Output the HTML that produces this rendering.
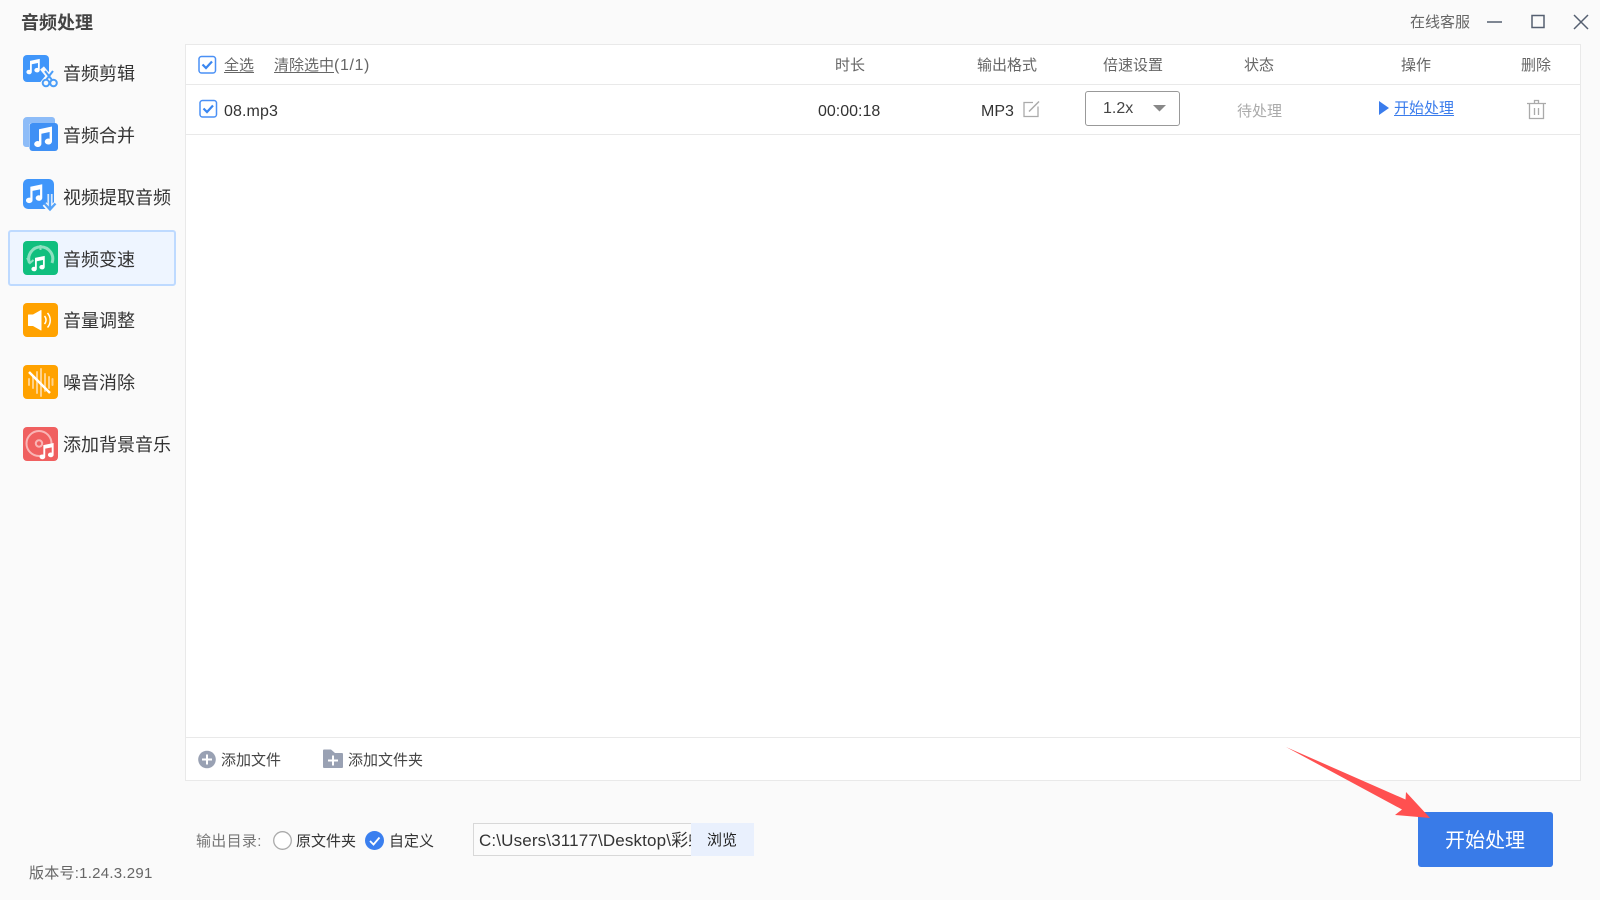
<!DOCTYPE html>
<html lang="zh">
<head>
<meta charset="utf-8">
<title>音频处理</title>
<style>
html,body{margin:0;padding:0}
body{width:1600px;height:900px;overflow:hidden;background:#fafafa;position:relative;font-family:"Liberation Sans","Noto Sans CJK SC",sans-serif;color:#333}
.t{position:absolute;white-space:nowrap;line-height:24px;height:24px;font-size:15px}
.nav{font-size:18px;left:63px;color:#333}
.h{color:#666}
.b{position:absolute;box-sizing:border-box}
svg{position:absolute;left:0;top:0}
u{text-underline-offset:2px}
</style>
</head>
<body>
<div class="b" style="left:185px;top:44px;width:1396px;height:737px;background:#fff;border:1px solid #e9e9e9"></div>
<div class="b" style="left:185px;top:84px;width:1396px;height:1px;background:#e9e9e9"></div>
<div class="b" style="left:185px;top:134px;width:1396px;height:1px;background:#e9e9e9"></div>
<div class="b" style="left:185px;top:737px;width:1396px;height:1px;background:#e9e9e9"></div>
<div class="b" style="left:8px;top:230px;width:168px;height:56px;background:#eef5ff;border:2px solid #bedaff;border-radius:3px"></div>

<div class="t" style="left:21px;top:11px;font-size:18px;font-weight:700;color:#444">音频处理</div>
<div class="t nav" style="top:62px">音频剪辑</div>
<div class="t nav" style="top:124px">音频合并</div>
<div class="t nav" style="top:186px">视频提取音频</div>
<div class="t nav" style="top:248px">音频变速</div>
<div class="t nav" style="top:309px">音量调整</div>
<div class="t nav" style="top:371px">噪音消除</div>
<div class="t nav" style="top:433px">添加背景音乐</div>
<div class="t" style="left:29px;top:862px;color:#666;letter-spacing:.25px">版本号:1.24.3.291</div>

<div class="t h" style="left:1410px;top:11px">在线客服</div>

<div class="t h" style="left:224px;top:54px"><u>全选</u></div>
<div class="t h" style="left:274px;top:54px"><u>清除选中</u><span style="font-size:16px;letter-spacing:.6px">(1/1)</span></div>
<div class="t h" style="left:835px;top:54px">时长</div>
<div class="t h" style="left:977px;top:54px">输出格式</div>
<div class="t h" style="left:1103px;top:54px">倍速设置</div>
<div class="t h" style="left:1244px;top:54px">状态</div>
<div class="t h" style="left:1401px;top:54px">操作</div>
<div class="t h" style="left:1521px;top:54px">删除</div>

<div class="t" style="left:224px;top:100px;font-size:16px;letter-spacing:.1px">08.mp3</div>
<div class="t" style="left:818px;top:100px;font-size:16px">00:00:18</div>
<div class="t" style="left:981px;top:100px;font-size:16px">MP3</div>
<div class="b" style="left:1085px;top:91px;width:95px;height:35px;border:1px solid #999;border-radius:3px;background:#fff"></div>
<div class="t" style="left:1103px;top:97px;color:#444;font-size:16px">1.2x</div>
<div class="t" style="left:1237px;top:100px;color:#aaa">待处理</div>
<div class="t" style="left:1394px;top:97px;color:#3a7cec"><u>开始处理</u></div>

<div class="t" style="left:221px;top:749px;color:#444">添加文件</div>
<div class="t" style="left:348px;top:749px;color:#444">添加文件夹</div>

<div class="t" style="left:196px;top:830px;color:#777;letter-spacing:.3px">输出目录:</div>
<div class="t" style="left:296px;top:830px">原文件夹</div>
<div class="t" style="left:389px;top:830px">自定义</div>
<div class="b" style="left:473px;top:823px;width:220px;height:33px;border:1px solid #d8d8d8;background:#fbfbfb"></div>
<div class="t" style="left:479px;top:829px;font-size:17px;width:212px;overflow:hidden;color:#333;letter-spacing:.15px">C:\Users\31177\Desktop\彩虹</div>
<div class="b" style="left:691px;top:823px;width:63px;height:33px;background:#e9f0fd"></div>
<div class="t" style="left:707px;top:829px;color:#222">浏览</div>
<div class="b" style="left:1418px;top:812px;width:135px;height:55px;background:#397be8;border-radius:3px"></div>
<div class="t" style="left:1445px;top:829px;font-size:20px;color:#fff">开始处理</div>

<svg width="1600" height="900" viewBox="0 0 1600 900" fill="none">
<defs>
<symbol id="note" viewBox="0 0 24 24" overflow="visible">
<path fill="#fff" d="M8 5.2 21 2.5V17.5a3.6 3 0 1 1-2.4-2.8V8L10.400 9.700V20a3.600 3 0 1 1-2.400-2.800Z"/>
</symbol>
</defs>

<!-- 1 cut -->
<rect x="23" y="55" width="26" height="27" rx="4" fill="#4096fa"/>
<use href="#note" x="24" y="57" width="18" height="18"/>
<path d="M42 68 55 84M55 68 42 84" stroke="#fafafa" stroke-width="5"/>
<path d="M45 71 52 80M53 71 46 80" stroke="#4a9df8" stroke-width="2"/>
<circle cx="46" cy="83" r="3.300" fill="#fafafa" stroke="#4a9df8" stroke-width="2"/>
<circle cx="53.500" cy="83" r="3.300" fill="#fafafa" stroke="#4a9df8" stroke-width="2"/>

<!-- 2 merge -->
<path d="M27 117H52a3 3 0 0 1 3 3V123H32a3 3 0 0 0-3 3V147H26a3 3 0 0 1-3-3V121a4 4 0 0 1 4-4Z" fill="#8dbcf8"/>
<rect x="29.500" y="123" width="28.500" height="28" rx="3" fill="#3f90f5"/>
<use href="#note" x="31" y="124" width="24" height="24"/>

<!-- 3 extract -->
<rect x="23" y="179" width="31" height="30" rx="5" fill="#4096fa"/>
<use href="#note" x="23" y="182" width="22" height="22"/>
<path d="M50 194V208M44.500 204 50 210 55.500 204" stroke="#fafafa" stroke-width="5"/>
<path d="M50 194V208.500M44.500 203.500 50 209.500 55.500 203.500" stroke="#55a3f9" stroke-width="2.400"/>

<!-- 4 speed -->
<rect x="23" y="241" width="35" height="34" rx="4" fill="#10bf7e"/>
<path d="M29.500 263A12 12 0 1 1 52 263" stroke="#8de0c0" stroke-width="3"/>
<path d="M40.500 245V250" stroke="#8de0c0" stroke-width="2"/>
<path d="M27 258 30 263 33.500 260" stroke="#8de0c0" stroke-width="2"/>
<use href="#note" x="29" y="254" width="18" height="18"/>

<!-- 5 volume -->
<rect x="23" y="303" width="35" height="34" rx="4" fill="#ffa200"/>
<path d="M28.500 315H33L41 310.500V330L33 325.500H28.500Z" fill="#fff" stroke="#fff" stroke-linejoin="round"/>
<path d="M44.500 316a6 6 0 0 1 0 8" stroke="#fff" stroke-width="1.500"/>
<path d="M47.500 313a11 11 0 0 1 0 14.500" stroke="#fff" stroke-width="1.500"/>

<!-- 6 noise -->
<rect x="23" y="365" width="35" height="34" rx="4" fill="#ffa200"/>
<g stroke="#ffd28a" stroke-width="2" stroke-linecap="round">
<path d="M29 379V385M33 376V388M37 372V393M41 369V396M45 374V391M49 377V388M52.500 379V385"/>
</g>
<path d="M29 372 50 393" stroke="#fff" stroke-width="2.500"/>

<!-- 7 bgm -->
<rect x="23" y="427" width="35" height="34" rx="4" fill="#f06060"/>
<circle cx="39" cy="443.500" r="12.500" stroke="#f9b5b5" stroke-width="2"/>
<circle cx="39" cy="443.500" r="3.200" stroke="#f9b5b5" stroke-width="2"/>
<path d="M44 447 57 445V460H40Z" fill="#f06060"/>
<use href="#note" x="37" y="441" width="19" height="19"/>

<!-- window controls -->
<path d="M1487 22H1502" stroke="#555f70" stroke-width="1.500"/>
<rect x="1532" y="15.500" width="12" height="12" stroke="#555f70" stroke-width="1.500"/>
<path d="M1574 15 1588 29M1588 15 1574 29" stroke="#555f70" stroke-width="1.500"/>

<!-- checkboxes -->
<rect x="199" y="56.500" width="16.500" height="16.500" rx="2.500" fill="#fff" stroke="#4a90f5" stroke-width="1.500"/>
<path d="M202.500 64.500 206 68 212 61.500" stroke="#3a86f0" stroke-width="2.200"/>
<rect x="200" y="100.500" width="16.500" height="16.500" rx="2.500" fill="#fff" stroke="#4a90f5" stroke-width="1.500"/>
<path d="M203.500 108.500 207 112 213 105.500" stroke="#3a86f0" stroke-width="2.200"/>

<!-- edit icon -->
<path d="M1033 102.500H1024V116.500H1038V106.500" stroke="#aaa" stroke-width="1.300"/>
<path d="M1029 111.500 1039 101.500" stroke="#aaa" stroke-width="1.500"/>

<!-- dropdown caret -->
<path d="M1153 105H1166L1159.500 111.500Z" fill="#888"/>

<!-- play -->
<path d="M1379 101 1389 108 1379 115Z" fill="#3a7cec"/>

<!-- trash -->
<path d="M1527 103.500H1546M1534.500 103V100.500H1538.500V103M1529.500 104V118.500H1543.500V104M1534.500 108V115M1538.500 108V115" stroke="#aaa" stroke-width="1.300"/>

<!-- add file -->
<circle cx="207" cy="759.500" r="8.800" fill="#99a1b3"/>
<path d="M202 759.500H212M207 754.500V764.500" stroke="#fff" stroke-width="2"/>
<!-- add folder -->
<path d="M323 750.500a1 1 0 0 1 1-1H331L335 753H342a1 1 0 0 1 1 1V767a1 1 0 0 1-1 1H324a1 1 0 0 1-1-1Z" fill="#99a1b3"/>
<path d="M328 760.500H338M333 755.500V765.500" stroke="#fff" stroke-width="2"/>

<!-- radios -->
<circle cx="282.500" cy="840.500" r="8.800" fill="#fff" stroke="#aaa" stroke-width="1.300"/>
<circle cx="374.500" cy="840.500" r="9.500" fill="#3a7fef"/>
<path d="M370 841 373.500 844.500 379.500 837.500" stroke="#fff" stroke-width="1.800"/>

<!-- red arrow -->
<path d="M1286 747 1405.500 799.500 1406 792 1430 818 1395 815 1402 809.500Z" fill="#ff5050"/>
</svg>
</body>
</html>
